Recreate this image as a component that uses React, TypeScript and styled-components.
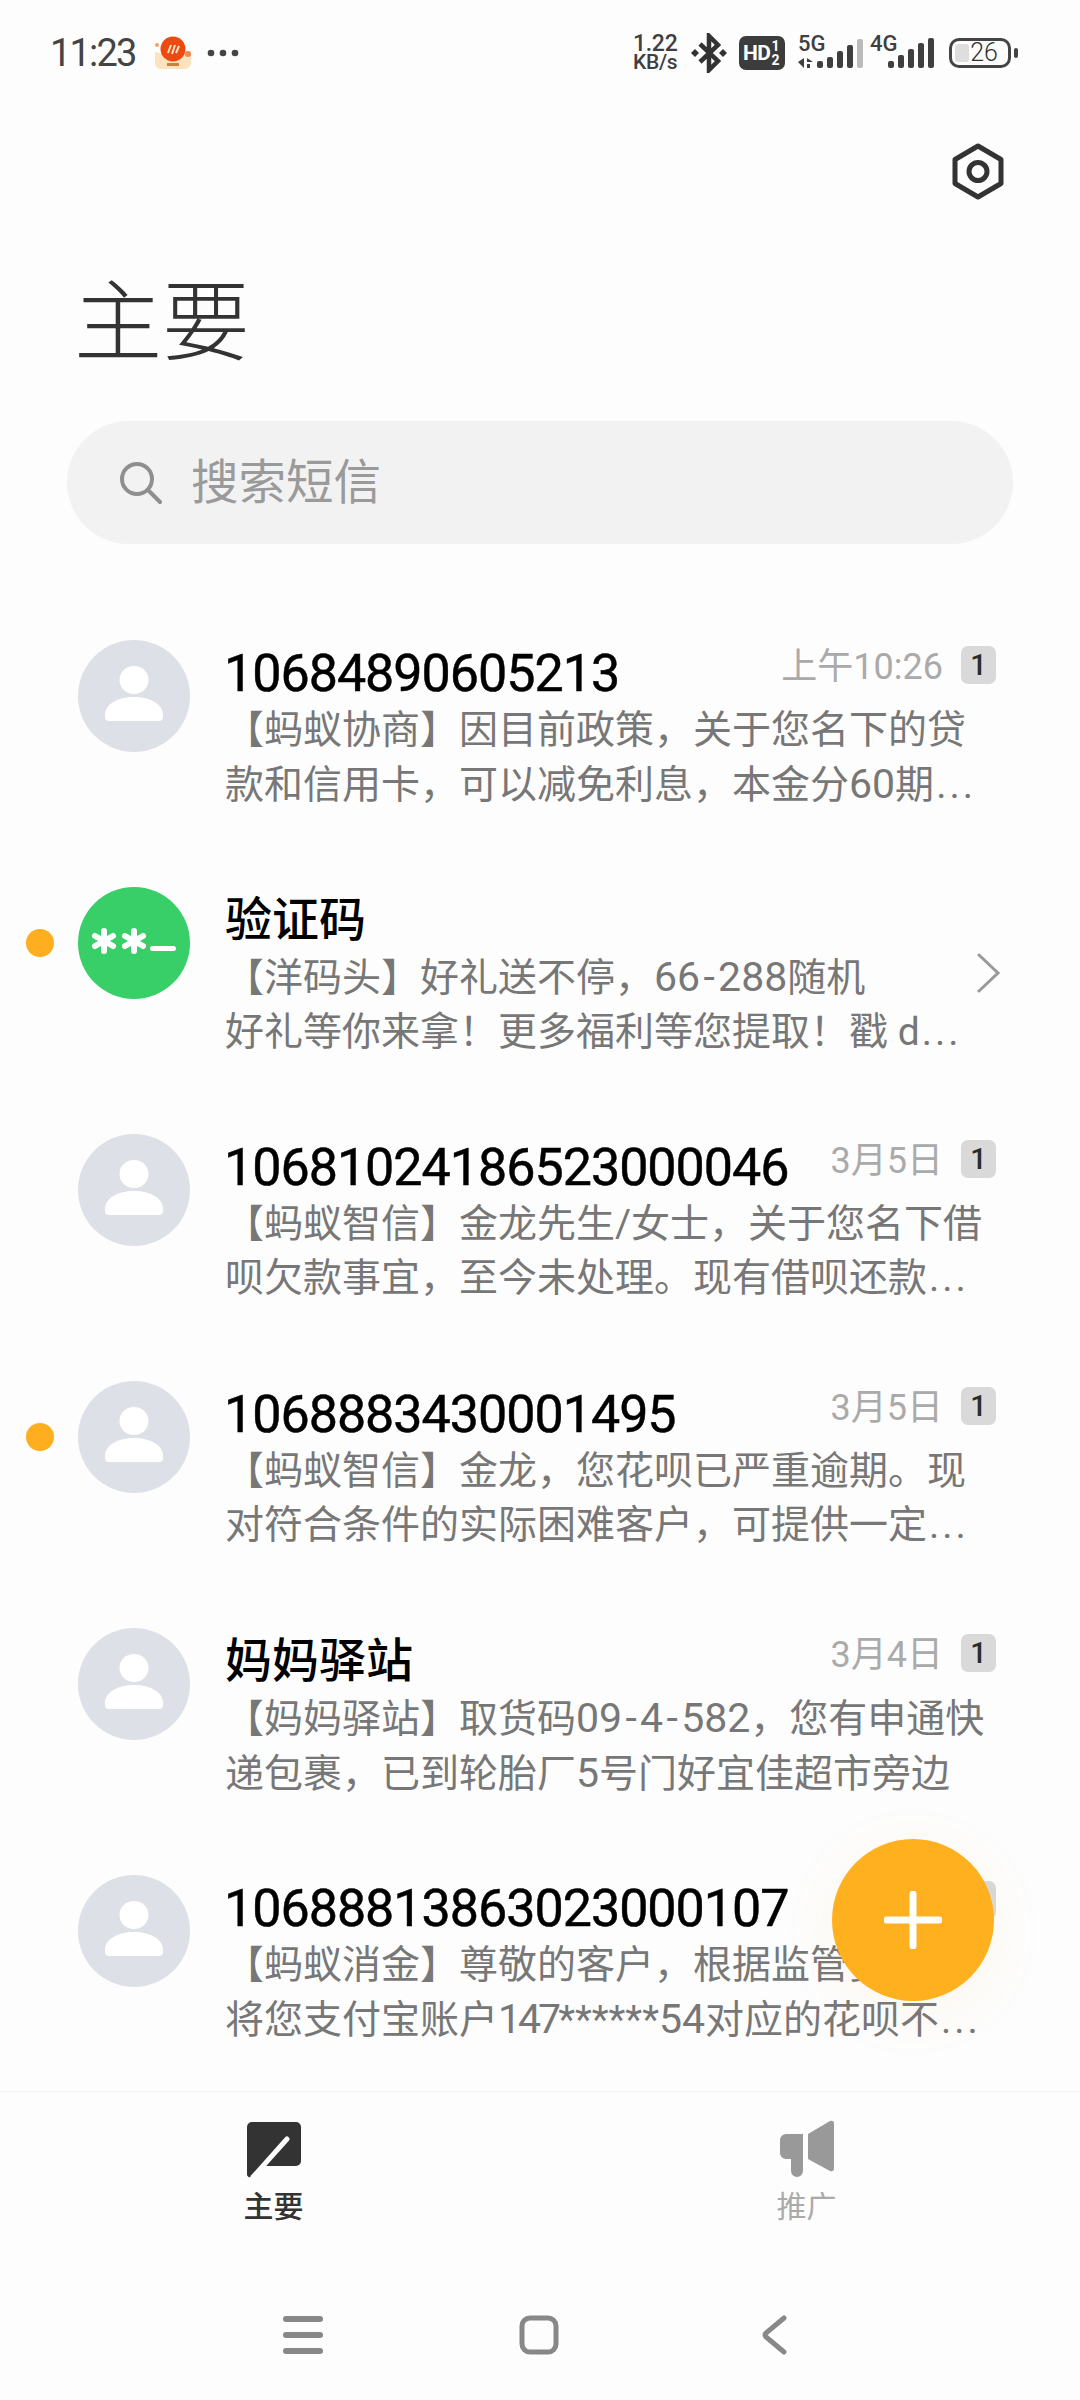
import React from "react";
import styled, { createGlobalStyle } from "styled-components";

const Global = createGlobalStyle`
  html, body { margin: 0; padding: 0; background: #fdfdfd; }
  * { box-sizing: border-box; }
`;

const FONT = `Roboto, "Noto Sans CJK SC", sans-serif`;

const Page = styled.div`
  position: relative;
  width: 1080px;
  height: 2400px;
  background: #fdfdfd;
  font-family: ${FONT};
  display: flex;
  flex-direction: column;
  overflow: hidden;
`;

const StatusBar = styled.div`
  height: 106px;
  flex: none;
  padding: 0 62px 0 50px;
  display: flex;
  align-items: center;
  justify-content: space-between;
  color: #444;
`;
const StatusLeft = styled.div`
  display: flex;
  align-items: center;
`;
const Clock = styled.span`
  font-size: 38px;
  letter-spacing: -1.8px;
  margin-right: 18px;
`;
const MoreDots = styled.svg`
  width: 32px;
  height: 8px;
  margin-left: 15px;
`;
const StatusRight = styled.div`
  display: flex;
  align-items: center;
`;
const Speed = styled.div`
  width: 48px;
  display: flex;
  flex-direction: column;
  font-weight: 500;
  color: #3f3f3f;
`;
const SpeedValue = styled.span`
  font-size: 23px;
  line-height: 18px;
  letter-spacing: -0.3px;
`;
const SpeedUnit = styled.span`
  font-size: 21px;
  line-height: 19px;
  letter-spacing: -0.3px;
  white-space: nowrap;
`;
const BtIcon = styled.svg`
  width: 36px;
  height: 40px;
  margin-left: 10px;
`;
const HdBadge = styled.div`
  width: 46px;
  height: 34px;
  margin-left: 12px;
  border-radius: 7px;
  background: #3c3c3c;
  color: #fff;
  font-weight: 700;
  display: flex;
  align-items: center;
  padding-left: 4px;
`;
const HdText = styled.span`
  font-size: 21px;
  letter-spacing: -0.5px;
`;
const HdSlots = styled.span`
  display: flex;
  flex-direction: column;
  font-size: 14px;
  line-height: 14px;
  margin-left: 1px;
`;
const SignalIcon = styled.svg<{ $left: number }>`
  height: 44px;
  margin-left: ${(p) => p.$left}px;
`;
const Battery = styled.div`
  width: 62px;
  height: 30px;
  margin-left: 15px;
  border: 3px solid #444;
  border-radius: 10px;
  padding: 3px;
  position: relative;
  display: flex;
  align-items: center;
  justify-content: center;
  font-size: 25px;
  font-weight: 300;
  color: #333;
`;
const BatteryFill = styled.span`
  position: absolute;
  left: 3px;
  top: 3px;
  bottom: 3px;
  width: 14px;
  background: #dedede;
  border-radius: 3px;
`;
const BatteryValue = styled.span`
  position: relative;
  margin-left: 8px;
  line-height: 24px;
`;
const BatteryNub = styled.span`
  width: 4px;
  height: 10px;
  margin-left: 3px;
  border-radius: 2px;
  background: #444;
`;

const TopActions = styled.div`
  flex: none;
  padding: 37px 76px 0 0;
  display: flex;
  justify-content: flex-end;
`;
const SettingsIcon = styled.svg`
  width: 52px;
  height: 57px;
`;

const Title = styled.h1`
  flex: none;
  margin: 73px 0 0 74px;
  font-size: 88px;
  line-height: 100px;
  font-weight: 300;
  color: #333;
`;

const SearchBar = styled.div`
  flex: none;
  width: 946px;
  height: 123px;
  margin: 48px 0 0 67px;
  padding-left: 53px;
  border-radius: 62px;
  background: #f2f2f2;
  display: flex;
  align-items: center;
  gap: 29px;
`;
const SearchIcon = styled.svg`
  width: 42px;
  height: 42px;
`;
const SearchText = styled.span`
  font-size: 47.5px;
  line-height: 60px;
  color: #9a9a9a;
`;

const List = styled.div`
  flex: 1;
  margin-top: 28px;
  overflow: hidden;
`;
const Row = styled.div`
  position: relative;
  height: 247px;
  padding: 0 84px 0 78px;
  display: flex;
  gap: 35px;
`;
const UnreadDot = styled.span`
  position: absolute;
  left: 26px;
  top: 110px;
  width: 28px;
  height: 28px;
  border-radius: 50%;
  background: #ffae1f;
`;
const AvatarIcon = styled.svg`
  flex: none;
  width: 112px;
  height: 112px;
  margin-top: 68px;
`;
const Body = styled.div`
  flex: 1;
  min-width: 0;
  padding-top: 71px;
`;
const TitleRow = styled.div`
  height: 60px;
  display: flex;
  align-items: center;
  justify-content: space-between;
`;
const Name = styled.span<{ $cjk?: boolean }>`
  font-size: ${(p) => (p.$cjk ? 47 : 52)}px;
  letter-spacing: ${(p) => (p.$cjk ? 0 : -1)}px;
  margin-left: ${(p) => (p.$cjk ? 0 : -1)}px;
  margin-top: ${(p) => (p.$cjk ? 0 : 2)}px;
  font-weight: ${(p) => (p.$cjk ? 500 : 400)};
  -webkit-text-stroke: ${(p) => (p.$cjk ? 0 : 0.5)}px #000;
  line-height: 60px;
  color: #000;
  white-space: nowrap;
`;
const Meta = styled.div`
  display: flex;
  align-items: center;
  gap: 18px;
  margin-top: -16px;
`;
const Time = styled.span`
  font-size: 36px;
  margin-bottom: 4px;
  color: #aaa;
  white-space: nowrap;
`;
const Badge = styled.span`
  width: 35px;
  height: 38px;
  border-radius: 7px;
  background: #d9d9d9;
  color: #2c2c2c;
  font-size: 29px;
  font-weight: 500;
  display: flex;
  align-items: center;
  justify-content: center;
`;
const Preview = styled.div`
  font-size: 39px;
  line-height: 54px;
  color: #777;
  white-space: nowrap;
`;
const Digits = styled.span<{ $narrow?: boolean }>`
  font-size: 41px;
  letter-spacing: ${(p) => (p.$narrow ? -3 : 0)}px;
`;
const Dash = styled.span`
  display: inline-block;
  width: 18px;
  text-align: center;
  font-size: 41px;
`;
const Ellipsis = styled.span`
  letter-spacing: 3px;
  margin-left: 2px;
`;
const ChevronIcon = styled.svg`
  flex: none;
  width: 25px;
  height: 40px;
  margin: 134px -5px 0 -21px;
`;

const Fab = styled.div`
  position: absolute;
  left: 832px;
  top: 1839px;
  width: 162px;
  height: 162px;
  border-radius: 50%;
  background: #ffb01f;
  box-shadow: 0 12px 60px rgba(255, 176, 31, 0.07);
  display: flex;
  align-items: center;
  justify-content: center;
`;
const FabPlus = styled.svg`
  width: 58px;
  height: 58px;
`;

const Tabs = styled.div`
  flex: none;
  height: 150px;
  border-top: 1px solid #f3f3f3;
  padding: 28px 7px 0;
  display: grid;
  grid-template-columns: 533px 533px;
`;
const Tab = styled.div`
  display: flex;
  flex-direction: column;
  align-items: center;
`;
const TabIcon = styled.svg`
  width: 56px;
  height: 58px;
`;
const TabLabel = styled.span<{ $active?: boolean }>`
  margin-top: 12px;
  font-size: 30px;
  line-height: 34px;
  font-weight: ${(p) => (p.$active ? 500 : 400)};
  color: ${(p) => (p.$active ? "#333" : "#aaa")};
`;

const NavBar = styled.div`
  flex: none;
  height: 159px;
  padding: 74px 0 0 185px;
  display: grid;
  grid-template-columns: repeat(3, 236px);
  justify-items: center;
  align-items: start;
`;
const NavIcon = styled.svg`
  width: 40px;
  height: 40px;
`;

const Person = () => (
  <AvatarIcon viewBox="0 0 112 112">
    <circle cx="56" cy="56" r="56" fill="#dde0e6" />
    <ellipse cx="56" cy="40" rx="14.5" ry="14" fill="#fff" />
    <path d="M27 75c0-11 13-18 29-18s29 7 29 18v2a4 4 0 0 1-4 4H31a4 4 0 0 1-4-4z" fill="#fff" />
  </AvatarIcon>
);

const Star = ({ x, y }: { x: number; y: number }) => (
  <g stroke="#fff" strokeWidth="6" strokeLinecap="round">
    <path d={`M${x} ${y - 10}V${y + 10}`} />
    <path d={`M${x - 9} ${y - 5}L${x + 9} ${y + 5}`} />
    <path d={`M${x - 9} ${y + 5}L${x + 9} ${y - 5}`} />
  </g>
);

const CodeAvatar = () => (
  <AvatarIcon viewBox="0 0 112 112">
    <circle cx="56" cy="56" r="56" fill="#38ce68" />
    <Star x={26} y={54} />
    <Star x={56} y={54} />
    <rect x="72" y="59" width="26" height="5" rx="2.5" fill="#fff" />
  </AvatarIcon>
);

const PreviewText = ({ text }: { text: string }) => (
  <Preview>
    {text.split(/(\d+|-|\.\.\.)/).map((part, i) => {
      if (part === "-") return <Dash key={i}>-</Dash>;
      if (part === "...") return <Ellipsis key={i}>...</Ellipsis>;
      if (/^\d+$/.test(part)) return <Digits key={i} $narrow={part === "147"}>{part}</Digits>;
      return part;
    })}
  </Preview>
);

type Msg = {
  name: string;
  cjk?: boolean;
  time?: string;
  lines: [string, string];
  dot?: boolean;
  code?: boolean;
};

const messages: Msg[] = [
  {
    name: "10684890605213",
    time: "上午10:26",
    lines: ["【蚂蚁协商】因目前政策，关于您名下的贷", "款和信用卡，可以减免利息，本金分60期..."],
  },
  {
    name: "验证码",
    cjk: true,
    dot: true,
    code: true,
    lines: ["【洋码头】好礼送不停，66-288随机", "好礼等你来拿！更多福利等您提取！戳 d..."],
  },
  {
    name: "10681024186523000046",
    time: "3月5日",
    lines: ["【蚂蚁智信】金龙先生/女士，关于您名下借", "呗欠款事宜，至今未处理。现有借呗还款..."],
  },
  {
    name: "1068883430001495",
    time: "3月5日",
    dot: true,
    lines: ["【蚂蚁智信】金龙，您花呗已严重逾期。现", "对符合条件的实际困难客户，可提供一定..."],
  },
  {
    name: "妈妈驿站",
    cjk: true,
    time: "3月4日",
    lines: ["【妈妈驿站】取货码09-4-582，您有申通快", "递包裹，已到轮胎厂5号门好宜佳超市旁边"],
  },
  {
    name: "10688813863023000107",
    time: "3月",
    lines: ["【蚂蚁消金】尊敬的客户，根据监管要求，", "将您支付宝账户147******54对应的花呗不..."],
  },
];

export default function App() {
  return (
    <Page>
      <Global />
      <StatusBar>
        <StatusLeft>
          <Clock>11:23</Clock>
          <svg width="38" height="34" viewBox="0 0 38 34">
            <path d="M1 15c6 5 30 5 36 0v12a6 6 0 0 1-6 6H7a6 6 0 0 1-6-6z" fill="#fde2bd" />
            <circle cx="19" cy="13" r="12.5" fill="#ec4a10" />
            <path d="M14 17l3-8M18 18l3-9M22 17l3-7" stroke="#ffe1c4" strokeWidth="2" />
            <circle cx="3" cy="9" r="2" fill="#f0a070" />
            <circle cx="34" cy="18" r="3" fill="#ec8a50" />
            <rect x="13" y="27" width="12" height="3" fill="#c9803c" />
          </svg>
          <MoreDots viewBox="0 0 32 8">
            <circle cx="4" cy="4" r="3.3" fill="#444" />
            <circle cx="16" cy="4" r="3.3" fill="#444" />
            <circle cx="28" cy="4" r="3.3" fill="#444" />
          </MoreDots>
        </StatusLeft>
        <StatusRight>
          <Speed>
            <SpeedValue>1.22</SpeedValue>
            <SpeedUnit>KB/s</SpeedUnit>
          </Speed>
          <BtIcon viewBox="0 0 36 40">
            <path d="M9 11l18 17-9 9V3l9 9L9 29" fill="none" stroke="#333" strokeWidth="4.5" />
            <path d="M4 16l4 4-4 4-4-4zM32 16l4 4-4 4-4-4z" fill="#333" />
          </BtIcon>
          <HdBadge>
            <HdText>HD</HdText>
            <HdSlots>
              <span>1</span>
              <span>2</span>
            </HdSlots>
          </HdBadge>
          <SignalIcon $left={12} width="67" viewBox="0 -4 67 44">
            <text x="1" y="16" fontFamily="Roboto" fontWeight="500" fontSize="22" fill="#3f3f3f">5G</text>
            <path d="M1 27l6-4v10zM10 23l6 4h-6zM10 29h3v4h-3z" fill="#3f3f3f" />
            <rect x="20" y="26" width="6" height="7" rx="2" fill="#3f3f3f" />
            <rect x="30" y="22" width="6" height="11" rx="2" fill="#3f3f3f" />
            <rect x="40" y="16" width="6" height="17" rx="2" fill="#3f3f3f" />
            <rect x="50" y="10" width="6" height="23" rx="2" fill="#3f3f3f" />
            <rect x="60" y="4" width="6" height="29" rx="2" fill="#bbb" />
          </SignalIcon>
          <SignalIcon $left={6} width="64" viewBox="0 -4 64 44">
            <text x="0" y="16" fontFamily="Roboto" fontWeight="500" fontSize="22" fill="#3f3f3f">4G</text>
            <rect x="18" y="26" width="6" height="7" rx="2" fill="#3f3f3f" />
            <rect x="28" y="20" width="6" height="13" rx="2" fill="#3f3f3f" />
            <rect x="38" y="14" width="6" height="19" rx="2" fill="#3f3f3f" />
            <rect x="48" y="8" width="6" height="25" rx="2" fill="#3f3f3f" />
            <rect x="58" y="3" width="6" height="30" rx="2" fill="#3f3f3f" />
          </SignalIcon>
          <Battery>
            <BatteryFill />
            <BatteryValue>26</BatteryValue>
          </Battery>
          <BatteryNub />
        </StatusRight>
      </StatusBar>

      <TopActions>
        <SettingsIcon viewBox="0 0 52 57">
          <path d="M26 3l23 13.5v24L26 54 3 40.5v-24z" fill="none" stroke="#333" strokeWidth="5" strokeLinejoin="round" />
          <circle cx="26" cy="28.5" r="9" fill="none" stroke="#333" strokeWidth="5" />
        </SettingsIcon>
      </TopActions>

      <Title>主要</Title>

      <SearchBar>
        <SearchIcon viewBox="0 0 42 42">
          <circle cx="17" cy="17" r="15" fill="none" stroke="#8f8f8f" strokeWidth="4" />
          <path d="M28 28l12 12" stroke="#8f8f8f" strokeWidth="4" strokeLinecap="round" />
        </SearchIcon>
        <SearchText>搜索短信</SearchText>
      </SearchBar>

      <List>
        {messages.map((m) => (
          <Row key={m.name}>
            {m.dot && <UnreadDot />}
            {m.code ? <CodeAvatar /> : <Person />}
            <Body>
              <TitleRow>
                <Name $cjk={m.cjk}>{m.name}</Name>
                {m.time && (
                  <Meta>
                    <Time>{m.time}</Time>
                    <Badge>1</Badge>
                  </Meta>
                )}
              </TitleRow>
              <PreviewText text={m.lines[0]} />
              <PreviewText text={m.lines[1]} />
            </Body>
            {!m.time && (
              <ChevronIcon viewBox="0 0 25 40">
                <path d="M3 2l19 18L3 38" fill="none" stroke="#999" strokeWidth="3" strokeLinecap="round" />
              </ChevronIcon>
            )}
          </Row>
        ))}
      </List>

      <Tabs>
        <Tab>
          <TabIcon viewBox="0 0 56 58">
            <path d="M6 2h44a5 5 0 0 1 5 5v34a5 5 0 0 1-5 5H15L5 57a3 3 0 0 1-4-2V7a5 5 0 0 1 5-5z" fill="#333" />
            <path d="M41 19L7 57" stroke="#fdfdfd" strokeWidth="5" strokeLinecap="round" />
          </TabIcon>
          <TabLabel $active>主要</TabLabel>
        </Tab>
        <Tab>
          <TabIcon viewBox="0 0 56 58">
            <path d="M7 14h17v37a6 6 0 0 1-12 0V39H7a6 6 0 0 1-6-6V20a6 6 0 0 1 6-6z" fill="#999" />
            <path d="M29 14L51 1q4-1 4 3v44q0 4-4 3L29 39z" fill="#999" />
          </TabIcon>
          <TabLabel>推广</TabLabel>
        </Tab>
      </Tabs>

      <NavBar>
        <NavIcon viewBox="0 0 40 40">
          <path d="M3 4h34M3 20h34M3 36h34" stroke="#888" strokeWidth="6" strokeLinecap="round" />
        </NavIcon>
        <NavIcon viewBox="0 0 40 40">
          <rect x="3" y="3" width="34" height="34" rx="8" fill="none" stroke="#888" strokeWidth="5" />
        </NavIcon>
        <NavIcon viewBox="0 0 40 40">
          <path d="M29 3L11 18a3 3 0 0 0 0 4l18 15" fill="none" stroke="#888" strokeWidth="5" strokeLinecap="round" />
        </NavIcon>
      </NavBar>

      <Fab>
        <FabPlus viewBox="0 0 58 58">
          <path d="M29 3v52M3 29h52" stroke="#fff" strokeWidth="7" strokeLinecap="round" />
        </FabPlus>
      </Fab>
    </Page>
  );
}
